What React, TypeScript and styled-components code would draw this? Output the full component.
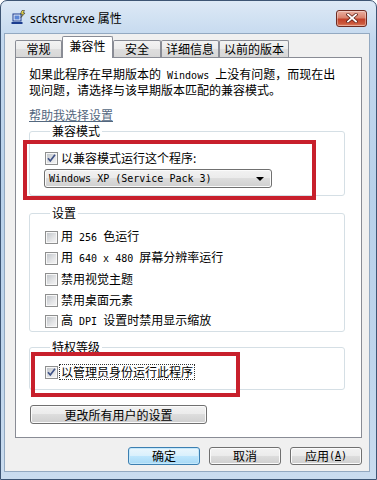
import React from "react";
import styled, { createGlobalStyle } from "styled-components";

const GlobalStyle = createGlobalStyle`
  html, body { margin: 0; padding: 0; }
  body {
    width: 377px;
    height: 480px;
    overflow: hidden;
    font-family: "Noto Sans CJK SC", "Noto Sans", sans-serif;
    font-size: 12px;
    color: #000;
  }
`;

const Frame = styled.div`
  box-sizing: border-box;
  width: 377px;
  height: 480px;
  display: flex;
  flex-direction: column;
  padding: 0 6px 7px 3px;
  border: 1px solid #3d5574;
  border-radius: 7px 7px 0 0;
  background: linear-gradient(180deg, #dde9f6 0%, #c3d8ee 8%, #b9d1ea 40%, #bfd5ec 75%, #cadcef 100%);
`;

const TitleBar = styled.div`
  height: 32px;
  display: flex;
  align-items: center;
  padding-left: 7px;
  flex: none;
`;

const Title = styled.span`
  margin-left: 4px;
  margin-top: 2px;
  font-family: "Noto Sans", "Noto Sans CJK SC", sans-serif;
  font-size: 12px;
  color: #000;
`;

const CloseButton = styled.div`
  box-sizing: border-box;
  margin-left: auto;
  margin-right: 3px;
  margin-top: 2px;
  width: 31px;
  height: 17px;
  border: 1px solid #6e2b22;
  border-radius: 3px;
  background: linear-gradient(180deg, #eab0a2 0%, #d9826d 45%, #c2412a 55%, #cc5a3d 85%, #e3876a 100%);
  box-shadow: inset 0 0 0 1px rgba(255, 255, 255, 0.35);
  display: flex;
  align-items: center;
  justify-content: center;
`;

const Client = styled.div`
  flex: 1;
  display: flex;
  flex-direction: column;
  background: #f0f0f0;
  border: 1px solid #93a9c1;
  padding: 2px 7px 6px 10px;
  min-height: 0;
`;

const TabRow = styled.div`
  display: flex;
  align-items: flex-end;
  height: 21px;
  flex: none;
`;

const Tab = styled.div<{ $w: number; $active?: boolean }>`
  box-sizing: border-box;
  width: ${(p) => p.$w}px;
  height: ${(p) => (p.$active ? 22 : 17)}px;
  margin-bottom: ${(p) => (p.$active ? -1 : 0)}px;
  border: 1px solid #898c95;
  border-bottom: none;
  border-radius: 2px 2px 0 0;
  background: ${(p) =>
    p.$active ? "#ffffff" : "linear-gradient(180deg, #f3f3f3 0%, #ebebeb 50%, #dedede 51%, #d7d7d7 100%)"};
  position: relative;
  z-index: ${(p) => (p.$active ? 1 : 0)};
  display: flex;
  align-items: center;
  justify-content: center;
  padding-bottom: ${(p) => (p.$active ? 3 : 0)}px;
  font-size: 12px;
  line-height: 14px;
`;

const Panel = styled.div`
  flex: 1;
  position: relative;
  display: flex;
  flex-direction: column;
  background: #fff;
  border: 1px solid #898c95;
  padding: 9px 16px 0 13px;
`;

const Desc = styled.p`
  margin: 0;
  font-size: 12px;
  line-height: 14px;
`;

const Link = styled.span`
  margin-top: 11px;
  align-self: flex-start;
  color: #53677e;
  text-decoration: underline;
  font-size: 12px;
  line-height: 14px;
`;

const Group = styled.fieldset<{ $top: number; $pt: number; $pb: number }>`
  margin: ${(p) => p.$top}px 0 0 0;
  min-width: 0;
  border: 1px solid #d5dfe5;
  border-radius: 3px;
  padding: ${(p) => p.$pt}px 0 ${(p) => p.$pb}px 15px;
  display: flex;
  flex-direction: column;
  gap: 7px;
`;

const Legend = styled.legend`
  margin-left: 5px;
  padding: 0 2px;
  font-size: 12px;
  line-height: 14px;
`;

const Row = styled.div`
  display: flex;
  align-items: center;
  gap: 2px;
  height: 14px;
  font-size: 12px;
  line-height: 14px;
  white-space: nowrap;
`;

const Box = styled.span`
  box-sizing: border-box;
  position: relative;
  flex: none;
  width: 13px;
  height: 13px;
  border: 1px solid #8e8f8f;
  background: linear-gradient(135deg, #bcc1c6 0%, #e4e5e7 60%, #f6f6f6 100%);
  box-shadow: inset 0 0 0 1px #f7f7f7;
`;

const Mark = styled.svg`
  position: absolute;
  left: 0;
  top: 0;
`;

const Label = styled.span<{ $focus?: boolean }>`
  outline: ${(p) => (p.$focus ? "1px dotted #333" : "none")};
  outline-offset: 0;
  padding: 0 1px;
`;

const Lat = styled.span`
  font-family: "DejaVu Sans Mono", "Liberation Mono", monospace;
  font-size: 10px;
`;

const Select = styled.div`
  box-sizing: border-box;
  margin-left: -1px;
  margin-top: -3px;
  width: 228px;
  height: 19px;
  border: 1px solid #707070;
  border-radius: 3px;
  background: linear-gradient(180deg, #f2f2f2 0%, #ebebeb 49%, #dddddd 50%, #cfcfcf 100%);
  box-shadow: inset 0 0 0 1px #fbfbfb;
  display: flex;
  align-items: center;
  padding: 0 7px 0 4px;
  white-space: nowrap;
`;

const Arrow = styled.span`
  margin-left: auto;
  width: 0;
  height: 0;
  border-left: 4px solid transparent;
  border-right: 4px solid transparent;
  border-top: 4px solid #000;
`;

const Button = styled.div<{ $w: number; $h?: number; $default?: boolean }>`
  box-sizing: border-box;
  width: ${(p) => p.$w}px;
  height: ${(p) => p.$h ?? 18}px;
  border: 1px solid ${(p) => (p.$default ? "#3c7fb1" : "#707070")};
  border-radius: 3px;
  background: ${(p) =>
    p.$default
      ? "linear-gradient(180deg, #eaf6fd 0%, #d9f0fc 49%, #bee6fd 50%, #a7d9f5 100%)"
      : "linear-gradient(180deg, #f2f2f2 0%, #ebebeb 49%, #dddddd 50%, #cfcfcf 100%)"};
  box-shadow: inset 0 0 0 1px ${(p) => (p.$default ? "#c4e8fb" : "#fbfbfb")};
  display: flex;
  align-items: center;
  justify-content: center;
  font-size: 12px;
  line-height: 14px;
  flex: none;
`;

const WideButton = styled(Button)`
  margin-top: 15px;
  margin-left: 1px;
`;

const Footer = styled.div`
  margin-top: 9px;
  display: flex;
  justify-content: flex-end;
  gap: 9px;
  flex: none;
`;

const RedBox = styled.div<{ $l: number; $t: number; $w: number; $h: number }>`
  position: absolute;
  box-sizing: border-box;
  left: ${(p) => p.$l}px;
  top: ${(p) => p.$t}px;
  width: ${(p) => p.$w}px;
  height: ${(p) => p.$h}px;
  border: 4px solid #c8202c;
  pointer-events: none;
`;

function Check({ checked, children, focus }: { checked?: boolean; children: React.ReactNode; focus?: boolean }) {
  return (
    <Row>
      <Box>
        {checked && (
          <Mark width="11" height="11" viewBox="0 0 11 11">
            <path d="M2 5.2 L4.3 8 L9 1.8" fill="none" stroke="#3f5286" strokeWidth="1.7" />
          </Mark>
        )}
      </Box>
      <Label $focus={focus}>{children}</Label>
    </Row>
  );
}

function AppIcon() {
  return (
    <svg width="15" height="15" viewBox="0 0 15 15">
      <rect x="2" y="4" width="8" height="7" fill="#e8eef8" stroke="#1c3d8f" strokeWidth="1" />
      <rect x="3.5" y="5.5" width="5" height="4" fill="#5b86d6" />
      <rect x="0.5" y="12" width="11" height="2" fill="#1c3d8f" />
      <path d="M11 0.5 L9.5 4 L11.5 4 L10 7.5 L14 3 L12 3 L13.5 0.5 Z" fill="#f4e44a" stroke="#2a2a2a" strokeWidth="0.6" />
    </svg>
  );
}

export default function App() {
  return (
    <>
      <GlobalStyle />
      <Frame>
        <TitleBar>
          <AppIcon />
          <Title>scktsrvr.exe 属性</Title>
          <CloseButton>
            <svg width="12" height="10" viewBox="0 0 12 10">
              <path d="M2 1.5 L10 8.5 M10 1.5 L2 8.5" stroke="#5a1e16" strokeWidth="3.2" strokeLinecap="square" />
              <path d="M2 1.5 L10 8.5 M10 1.5 L2 8.5" stroke="#ffffff" strokeWidth="1.8" strokeLinecap="square" />
            </svg>
          </CloseButton>
        </TitleBar>
        <Client>
          <TabRow>
            <Tab $w={47}>常规</Tab>
            <Tab $w={51} $active>兼容性</Tab>
            <Tab $w={48}>安全</Tab>
            <Tab $w={58}>详细信息</Tab>
            <Tab $w={70}>以前的版本</Tab>
          </TabRow>
          <Panel>
            <Desc>
              如果此程序在早期版本的<Lat> Windows </Lat>上没有问题，而现在出
              <br />
              现问题，请选择与该早期版本匹配的兼容模式。
            </Desc>
            <Link>帮助我选择设置</Link>
            <Group $top={2} $pt={13} $pb={7}>
              <Legend>兼容模式</Legend>
              <Check checked>以兼容模式运行这个程序:</Check>
              <Select>
                <Lat>Windows XP (Service Pack 3)</Lat>
                <Arrow />
              </Select>
            </Group>
            <Group $top={10} $pt={10} $pb={3}>
              <Legend>设置</Legend>
              <Check>
                用<Lat> 256 </Lat>色运行
              </Check>
              <Check>
                用<Lat> 640 x 480 </Lat>屏幕分辨率运行
              </Check>
              <Check>禁用视觉主题</Check>
              <Check>禁用桌面元素</Check>
              <Check>
                高<Lat> DPI </Lat>设置时禁用显示缩放
              </Check>
            </Group>
            <Group $top={8} $pt={11} $pb={10}>
              <Legend>特权等级</Legend>
              <Check checked focus>
                以管理员身份运行此程序
              </Check>
            </Group>
            <WideButton $w={177} $h={19}>
              更改所有用户的设置
            </WideButton>
            <RedBox $l={7} $t={82} $w={293} $h={60} />
            <RedBox $l={15} $t={294} $w={209} $h={45} />
          </Panel>
          <Footer>
            <Button $w={72} $default>
              确定
            </Button>
            <Button $w={72}>取消</Button>
            <Button $w={72}>
              应用<Lat>
                (<u>A</u>)
              </Lat>
            </Button>
          </Footer>
        </Client>
      </Frame>
    </>
  );
}
